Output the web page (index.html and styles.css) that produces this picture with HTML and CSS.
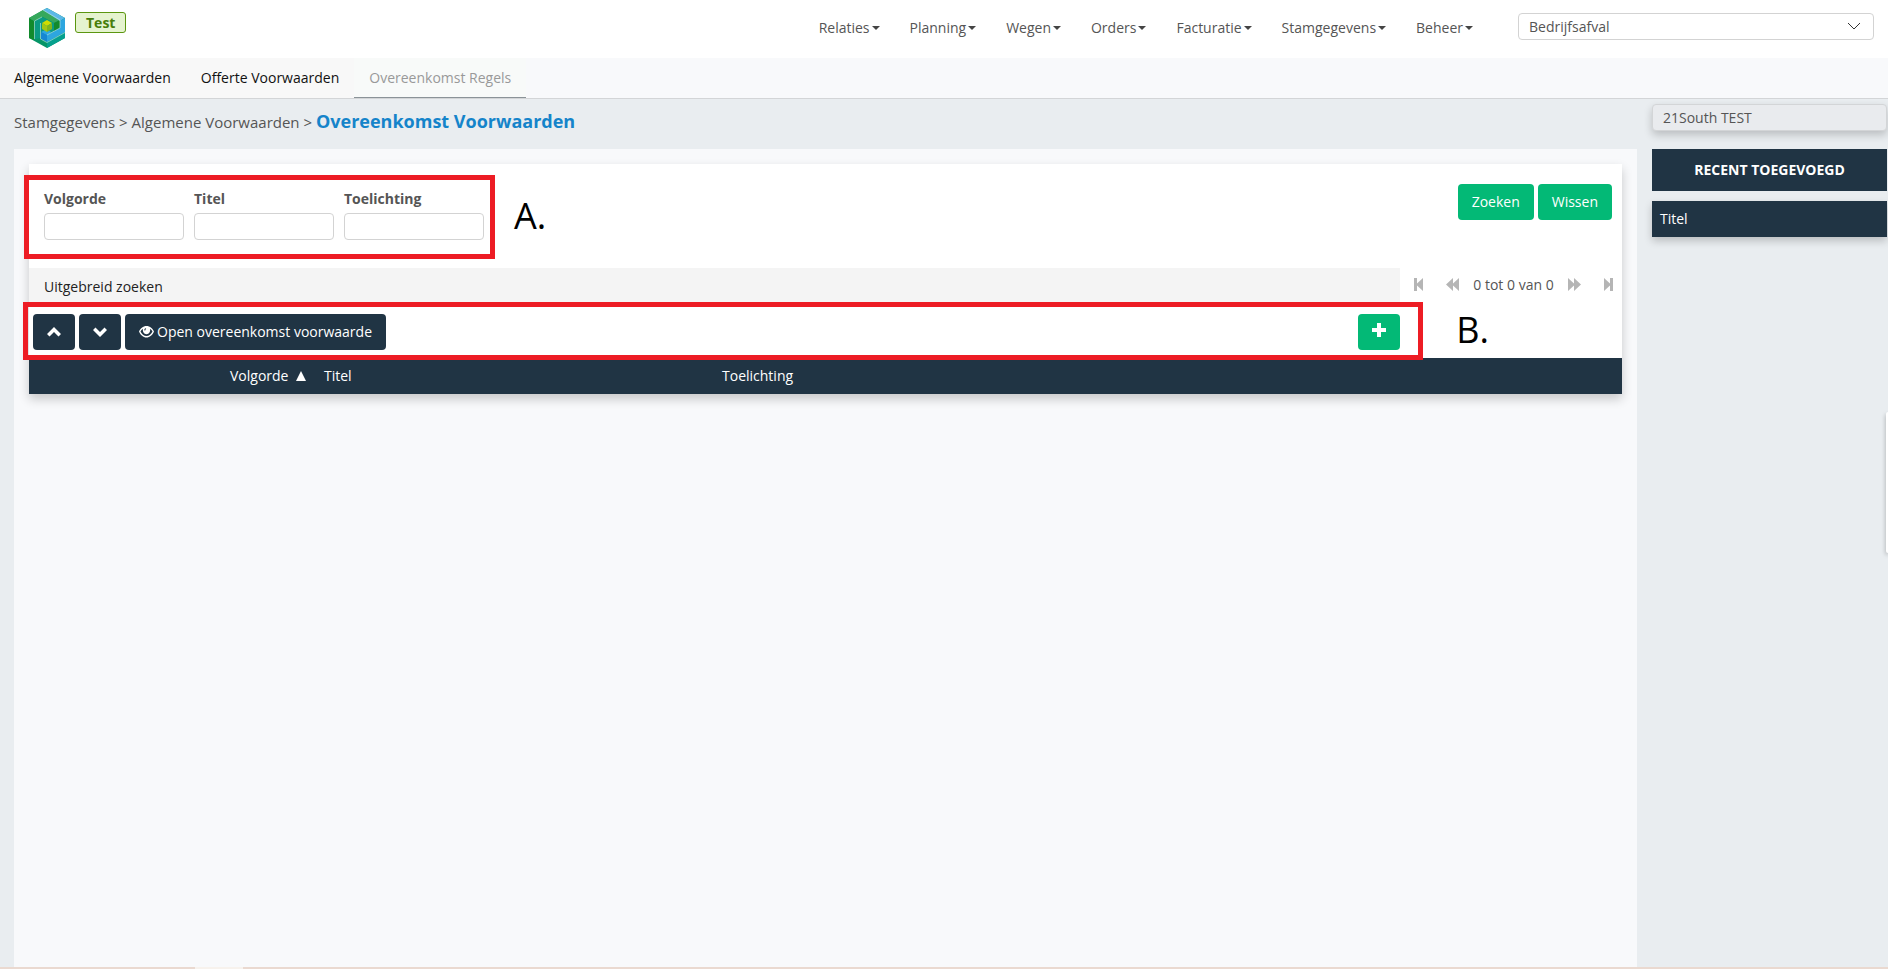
FILE: index.html
```html
<!DOCTYPE html>
<html lang="nl">
<head>
<meta charset="utf-8">
<title>Overeenkomst Voorwaarden</title>
<link rel="stylesheet" href="styles.css">
</head>
<body>
<header class="topbar">
  <div class="brand">
    <svg class="logo" viewBox="0 0 36 40" aria-hidden="true">
      <path fill="#079567" d="M18 0 36 10V30L18 40 0 30V10z"/>
      <path fill="#05a08d" d="M18 34 36 24V30L18 40z"/>
      <path fill="#128a2c" d="M0 10 5 13V32L0 30z"/>
      <path fill="#36a85c" d="M0 10 14 2 31 12 25 15 14 9 5 13z"/>
      <path fill="#0a9a82" d="M6 13 13 9 25 15V23L18 27 12 24V30L6 31z"/>
      <path fill="#128a2c" d="M25 15 31 12V20L25 23z"/>
      <path fill="#5bb8e8" d="M14 2 18 0 36 10 31 13z"/>
      <path fill="#2da6df" d="M31 13 36 10V24L18 34V27L31 20z"/>
      <path fill="#2da6df" d="M12 24 18 21 22 24 18 28z"/>
      <path fill="#1687d2" d="M12 24 18 27V34L12 31z"/>
      <path fill="#d1dc00" d="M13 15 18 12 23 15 18 18z"/>
      <path fill="#a3c614" d="M13 15 18 18V24L13 21z"/>
      <path fill="#7fb51c" d="M23 15 18 18V24L23 21z"/>
      <path fill="none" stroke="#c5e8e2" stroke-width="0.6" d="M14 2 31 12V20L18 27M5.500 31V13L13 9M11.500 15V31L18 34.500 36 24.500"/>
    </svg>
    <span class="env">Test</span>
  </div>
  <nav class="mainnav" aria-label="Hoofdmenu">
    <a href="#">Relaties<i class="caret"></i></a>
    <a href="#">Planning<i class="caret"></i></a>
    <a href="#">Wegen<i class="caret"></i></a>
    <a href="#">Orders<i class="caret"></i></a>
    <a href="#">Facturatie<i class="caret"></i></a>
    <a href="#">Stamgegevens<i class="caret"></i></a>
    <a href="#">Beheer<i class="caret"></i></a>
  </nav>
  <div class="picker">
    <select aria-label="Afdeling"><option>Bedrijfsafval</option></select>
    <svg class="chevron" viewBox="0 0 12 8" aria-hidden="true"><path d="M0 1 6 7 12 1"/></svg>
  </div>
</header>
<nav class="subnav" aria-label="Submenu">
  <a href="#">Algemene Voorwaarden</a>
  <a href="#">Offerte Voorwaarden</a>
  <a href="#" class="active" aria-current="page">Overeenkomst Regels</a>
</nav>
<div class="layout">
  <main class="content">
    <h1 class="crumbs">Stamgegevens &gt; Algemene Voorwaarden &gt; <strong>Overeenkomst Voorwaarden</strong></h1>
    <div class="panel">
      <section class="card">
        <form class="search">
          <div class="fields">
            <div class="field"><label for="volgorde">Volgorde</label><input id="volgorde" type="text"></div>
            <div class="field"><label for="titel">Titel</label><input id="titel" type="text"></div>
            <div class="field"><label for="toelichting">Toelichting</label><input id="toelichting" type="text"></div>
          </div>
          <div class="actions">
            <button type="button" class="btn green">Zoeken</button>
            <button type="button" class="btn green">Wissen</button>
          </div>
        </form>
        <div class="row">
          <a href="#" class="advanced">Uitgebreid zoeken</a>
          <div class="pager">
            <button type="button" aria-label="Eerste"><svg class="end" viewBox="0 0 9 13"><path d="M0 0H3V5.500L9 0V13L3 7.500V13H0z"/></svg></button>
            <button type="button" aria-label="Vorige"><svg class="step" viewBox="0 0 13 13"><path d="M0 6.500 7 0V5.500L13 0V13L7 7.500V13z"/></svg></button>
            <span>0 tot 0 van 0</span>
            <button type="button" aria-label="Volgende"><svg class="step" viewBox="0 0 13 13"><path d="M13 6.500 6 0V5.500L0 0V13L6 7.500V13z"/></svg></button>
            <button type="button" aria-label="Laatste"><svg class="end" viewBox="0 0 9 13"><path d="M9 0H6V5.500L0 0V13L6 7.500V13H9z"/></svg></button>
          </div>
        </div>
        <div class="row">
          <div class="toolbar">
            <button type="button" class="btn dark icon" aria-label="Omhoog"><svg width="14" height="10" viewBox="0 0 14 10"><path d="M7 0 14 7 11.500 9.500 7 5 2.500 9.500 0 7z"/></svg></button>
            <button type="button" class="btn dark icon" aria-label="Omlaag"><svg width="14" height="10" viewBox="0 0 14 10"><path d="M7 10 14 3 11.500 .5 7 5 2.500 .5 0 3z"/></svg></button>
            <button type="button" class="btn dark open"><svg width="15" height="12" viewBox="0 0 15 12"><path fill-rule="evenodd" d="M7.500 0C11 0 13.800 2.700 15 5.500 13.500 9 10.800 11.500 7.500 11.500S1.500 9 0 5.500C1.200 2.700 4 0 7.500 0zM4 2.800C2.800 3.500 2 4.500 1.500 5.500 2.700 8.200 5 10 7.500 10S12.300 8.200 13.500 5.500C13 4.500 12.200 3.500 11 2.800 11.700 5.500 10 8.200 7.500 8.200S3.300 5.500 4 2.800zM6.800 2.200C5.700 2.500 5.200 3.300 5.400 4.500L6.300 4.600C6.200 3.800 6.500 3.300 7.200 3z"/></svg>Open overeenkomst voorwaarde</button>
            <button type="button" class="btn green icon add" aria-label="Toevoegen"><svg width="14" height="14" viewBox="0 0 14 14"><path d="M5 0H9V5H14V9H9V14H5V9H0V5H5z"/></svg></button>
          </div>
        </div>
        <table class="grid">
          <colgroup><col class="c-check"><col class="c-order"><col class="c-title"><col></colgroup>
          <thead><tr><td></td><th scope="col">Volgorde <svg class="sort" viewBox="0 0 10 10"><path d="M5 0 10 10H0z"/></svg></th><th scope="col">Titel</th><th scope="col">Toelichting</th></tr></thead>
        </table>
        <div class="mark mark-a"></div>
        <div class="mark mark-b"></div>
        <span class="note note-a">A.</span>
        <span class="note note-b">B.</span>
      </section>
    </div>
  </main>
  <aside class="side">
    <input class="company" type="text" value="21South TEST" aria-label="Bedrijf" readonly>
    <h2 class="recent">RECENT TOEGEVOEGD</h2>
    <div class="recent-title">Titel</div>
  </aside>
</div>
<footer class="strip"><span class="tab"></span></footer>
<div class="handle"></div>
</body>
</html>
```

FILE: styles.css
```css
* { box-sizing: border-box; }
body {
  margin: 0;
  min-height: 100vh;
  display: flex;
  flex-direction: column;
  background: #e9edf0;
  color: #555;
  font: 14px/20px "Open Sans", sans-serif;
  overflow-x: hidden;
}
a { color: inherit; text-decoration: none; }
button, input, select { font: inherit; color: inherit; }

.topbar {
  display: flex;
  align-items: flex-start;
  height: 58px;
  padding: 0 14px 0 29px;
  background: #fff;
}
.brand { display: flex; gap: 10px; flex: 1; padding-top: 8px; }
.logo { width: 36px; height: 40px; }
.env {
  height: 21px;
  margin-top: 4px;
  padding: 0 10px;
  border: 1px solid #5b9610;
  border-radius: 3px;
  background: #e5f3cf;
  color: #487d0a;
  font-weight: 700;
  line-height: 19px;
}
.mainnav { display: flex; gap: 30px; padding-top: 18px; }
.mainnav a { display: flex; align-items: center; gap: 2px; }
.caret {
  border: 4px solid transparent;
  border-top: 4px solid #444;
  border-bottom: 0;
}
.picker { position: relative; width: 356px; margin: 13px 0 0 45px; }
.picker select {
  display: block;
  width: 100%;
  height: 27px;
  padding: 0 10px;
  border: 1px solid #d3d3d3;
  border-radius: 4px;
  background: #fff;
  appearance: none;
}
.chevron {
  position: absolute;
  right: 14px;
  top: 9px;
  width: 12px;
  height: 8px;
  fill: none;
  stroke: #333;
}

.subnav {
  display: flex;
  height: 41px;
  background: #f8f9fb;
  border-bottom: 1px solid #d3d5d7;
  color: #111;
}
.subnav a { padding: 10px 15px 9px; background: #f8f8f8; }
.subnav a:first-child { padding-left: 14px; }
.subnav .active {
  background: #f8faf9;
  border-bottom: 1px solid #8b9398;
  color: #999;
}

.layout { display: flex; flex: 1; gap: 15px; padding: 0 1px 0 14px; }
.content { display: flex; flex-direction: column; flex: 1; }
.crumbs {
  height: 50px;
  margin: 0;
  padding-top: 10px;
  font-size: 15px;
  font-weight: 400;
  line-height: 24px;
}
.crumbs strong { color: #1584ca; font-size: 18px; font-weight: 700; }
.panel { flex: 1; padding: 15px; background: #f8f9fb; }
.card {
  position: relative;
  background: #fff;
  box-shadow: 0 5px 10px rgba(0, 0, 0, .2);
}
.search {
  display: flex;
  justify-content: space-between;
  height: 104px;
  padding: 20px 10px 0 15px;
}
.fields { display: flex; gap: 10px; padding-top: 5px; }
.field { width: 140px; }
.field label { display: block; margin-bottom: 4px; font-weight: 700; }
.field input {
  display: block;
  width: 100%;
  height: 27px;
  border: 1px solid #d3d3d3;
  border-radius: 4px;
  background: #fff;
}
.actions { display: flex; gap: 4px; }
.btn {
  height: 36px;
  padding: 0 14px;
  border: 0;
  border-radius: 4px;
  color: #fff;
}
.btn svg { fill: #fff; }
.green { background: #03b976; }
.dark { background: #203444; }
.icon { width: 42px; padding: 0; }
.row { display: grid; grid-template-columns: minmax(0, 1fr) 222px; }
.advanced { padding: 9px 15px; background: #f4f4f4; color: #222; }
.pager {
  display: flex;
  align-items: center;
  justify-content: space-between;
  padding: 0 9px 5px 14px;
}
.pager button {
  display: flex;
  padding: 0;
  border: 0;
  background: none;
}
.pager svg { height: 13px; fill: #b5b5b5; }
.end { width: 9px; }
.step { width: 13px; }
.pager button:first-child { margin-right: 8px; }
.pager button:last-child { margin-left: 8px; }
.toolbar { display: flex; gap: 4px; padding: 8px 0 8px 4px; }
.open { display: flex; align-items: center; gap: 3px; padding: 0 14px; }
.add { margin-left: auto; }
.grid {
  width: 100%;
  border-collapse: collapse;
  table-layout: fixed;
  background: #203444;
  color: #fff;
}
.grid td, .grid th { height: 36px; padding: 0; font-weight: 400; text-align: left; }
.c-check { width: 201px; }
.c-order { width: 94px; }
.c-title { width: 398px; }
.sort { width: 10px; height: 10px; margin-left: 4px; fill: #fff; }

/* Annotations drawn over the form */
.mark { position: absolute; border: 5px solid #ed1c24; pointer-events: none; }
.mark-a { left: -5px; top: 11px; width: 471px; height: 84px; }
.mark-b { left: -6px; right: 199px; top: 138px; height: 58px; }
.note { position: absolute; color: #000; font-size: 36px; line-height: 48px; }
.note-a { left: 485px; top: 28px; }
.note-b { right: 133px; top: 142px; }

.side { width: 235px; padding-top: 5px; }
.company {
  display: block;
  width: 100%;
  height: 27px;
  padding: 0 10px;
  border: 1px solid #d3d5d7;
  border-radius: 4px;
  background: #e9ebee;
  box-shadow: 0 4px 8px rgba(0, 0, 0, .2);
}
.recent {
  margin: 18px 0 10px;
  padding: 11px 0;
  background: #203444;
  color: #fff;
  font-size: 14px;
  font-weight: 700;
  text-align: center;
}
.recent-title {
  padding: 8px;
  background: #203444;
  color: #fff;
  box-shadow: 0 4px 8px rgba(0, 0, 0, .2);
}
.strip { display: flex; height: 2px; background: #ead9d0; padding-left: 195px; }
.tab { width: 48px; background: #f7f2ed; }
.handle {
  position: absolute;
  right: 0;
  top: 412px;
  width: 2px;
  height: 141px;
  border-radius: 2px 0 0 2px;
  background: #fff;
  box-shadow: 0 2px 4px rgba(0, 0, 0, .4);
}
```
